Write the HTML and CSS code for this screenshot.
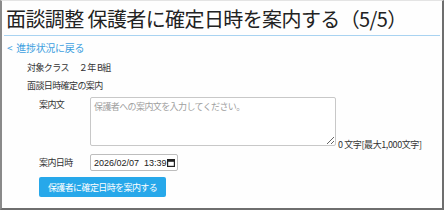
FILE: index.html
```html
<!DOCTYPE html>
<html lang="ja">
<head>
<meta charset="utf-8">
<link rel="stylesheet" href="styles.css">
</head>
<body>
<div class="frame">
  <h1 class="title">面談調整 保護者に確定日時を案内する（5/5）</h1>
  <a class="back" href="#"><span class="lt">&lt;</span>進捗状況に戻る</a>
  <div class="content">
    <div class="row-class"><span>対象クラス</span><span class="cls">２年 B組</span></div>
    <div class="section">面談日時確定の案内</div>
    <div class="field">
      <label class="lbl">案内文</label>
      <textarea class="msg" placeholder="保護者への案内文を入力してください。"></textarea>
      <span class="count">0 文字[最大1,000文字]</span>
    </div>
    <div class="field field-date">
      <label class="lbl">案内日時</label>
      <div class="dt">
        <span class="dt-text">2026/02/07&nbsp; 13:39</span>
        <svg class="cal" width="8" height="8" viewBox="0 0 8 8" aria-hidden="true">
          <rect x="0.6" y="0.6" width="6.8" height="6.8" fill="none" stroke="#222" stroke-width="1.2"/>
          <rect x="0.6" y="0.6" width="6.8" height="2.2" fill="#222"/>
        </svg>
      </div>
    </div>
    <div class="actions">
      <button class="btn">保護者に確定日時を案内する</button>
    </div>
  </div>
</div>
</body>
</html>
```
FILE: styles.css
```css
html, body {
  margin: 0;
  padding: 0;
  background: #ffffff;
}
body {
  width: 444px;
  height: 210px;
  font-family: "Noto Sans CJK JP", "Noto Sans", sans-serif;
  color: #333;
}
.frame {
  box-sizing: border-box;
  width: 444px;
  height: 210px;
  border-top: 1px solid #e4e4e4;
  border-left: 2px solid #8a8a8a;
  border-right: 2px solid #6e6e6e;
  border-bottom: 2px solid #6e6e6e;
  background: #fefefe;
  padding: 0 2px;
  overflow: hidden;
}
.title {
  margin: 0;
  padding: 6px 0 4px 2px;
  font-size: 20px;
  line-height: 24px;
  font-weight: 400;
  color: #222;
  border-bottom: 1px solid #a9d3f1;
  white-space: nowrap;
  letter-spacing: -0.6px;
}
.back {
  display: flex;
  align-items: center;
  margin: 4px 0 0 3px;
  font-size: 10px;
  line-height: 16px;
  color: #3d9fe0;
  text-decoration: none;
  letter-spacing: -0.3px;
}
.lt {
  margin-right: 4px;
}
.content {
  padding-left: 23px;
  font-size: 9px;
  letter-spacing: -0.6px;
  color: #333;
}
.row-class {
  margin-top: 5px;
  line-height: 14px;
  display: flex;
  gap: 10px;
}
.section {
  margin-top: 4px;
  line-height: 14px;
}
.field {
  display: flex;
  align-items: flex-start;
  margin-top: 4px;
  padding-left: 12px;
}
.lbl {
  width: 51px;
  line-height: 14px;
  margin-top: 1px;
}
.msg {
  box-sizing: border-box;
  width: 246px;
  height: 49px;
  margin: 0;
  border: 1px solid #c8c8c8;
  border-radius: 2px;
  padding: 2px 3px;
  font-family: "Noto Sans CJK JP", sans-serif;
  font-size: 9px;
  letter-spacing: -0.6px;
  line-height: 13px;
  color: #333;
  resize: both;
}
.msg::placeholder {
  color: #a0a0a0;
}
.count {
  align-self: flex-end;
  margin-left: 2px;
  margin-bottom: -5px;
  font-size: 9px;
  letter-spacing: -0.4px;
  line-height: 12px;
  white-space: nowrap;
}
.field-date {
  margin-top: 8px;
  align-items: center;
}
.field-date .lbl {
  margin-top: 0;
}
.dt {
  box-sizing: border-box;
  width: 88px;
  height: 17px;
  display: flex;
  align-items: center;
  justify-content: space-between;
  padding: 0 2px 0 3px;
  border: 1px solid #bdbdbd;
  border-radius: 2px;
  background: #fff;
  font-family: "Liberation Sans", Arial, sans-serif;
  font-size: 9px;
  letter-spacing: 0;
  color: #222;
}
.dt-text {
  white-space: nowrap;
}
.cal {
  display: block;
  flex: none;
}
.actions {
  padding-left: 12px;
  margin-top: 6px;
}
.btn {
  box-sizing: border-box;
  width: 127px;
  height: 20px;
  border: none;
  border-radius: 2px;
  background: #27a8ea;
  color: #fff;
  font-family: "Noto Sans CJK JP", sans-serif;
  font-size: 9px;
  letter-spacing: -0.6px;
  padding: 0;
}
```
